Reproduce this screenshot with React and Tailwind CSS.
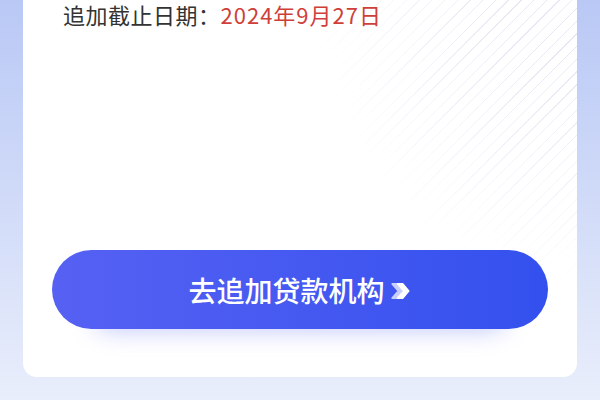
import React from 'react';

const Chevron = () => (
  <svg width="22" height="20" viewBox="0 0 20 18" className="ml-[5px] mt-[2px]">
    <path d="M2 2.5 L7 2.5 L12.5 9 L7 15.5 L2 15.5 L7.5 9 Z" fill="#c9cffb" strokeLinejoin="round" stroke="#c9cffb" strokeWidth="1.5" />
    <path d="M7 2.5 L11.5 2.5 L17 9 L11.5 15.5 L7 15.5 L12.5 9 Z" fill="#ffffff" strokeLinejoin="round" stroke="#ffffff" strokeWidth="1.5" />
  </svg>
);

const App = () => {
  return (
    <div
      className="w-[600px] h-[400px] flex flex-col px-[23px] pb-[23px] bg-gradient-to-b from-[#b9c8f5] to-[#e9eefb] overflow-hidden"
      style={{ fontFamily: '"Noto Sans CJK SC", "Noto Sans", sans-serif' }}
    >
      <div className="relative flex-1 bg-white rounded-b-[14px] overflow-hidden">
        {/* faint diagonal stripes in the corner */}
        <div className="absolute right-0 top-0 w-[260px] h-[280px] bg-[repeating-linear-gradient(135deg,#e6e9f3_0px,#e6e9f3_1px,transparent_1px,transparent_9px)] [mask-image:radial-gradient(ellipse_at_top_right,black_15%,transparent_72%)]" />

        <div className="relative pl-[40px] text-[22px] leading-[28px]">
          <span className="text-[#333333] tracking-[0.5px]">追加截止日期：</span>
          <span className="text-[#cf3f3a] tracking-[1px]">2024年9月27日</span>
        </div>

        <div className="relative mt-[222px] mx-[29px]">
          <div className="absolute left-[40px] right-[40px] top-[40px] h-[40px] rounded-full bg-[#8090f5] opacity-50 blur-[12px]" />
          <button className="relative w-full h-[79px] rounded-full bg-gradient-to-r from-[#5661f3] to-[#3350ee] flex items-center justify-center text-white text-[28px] font-medium">
            <span>去追加贷款机构</span>
            <Chevron />
          </button>
        </div>
      </div>
    </div>
  );
};

export default App;
